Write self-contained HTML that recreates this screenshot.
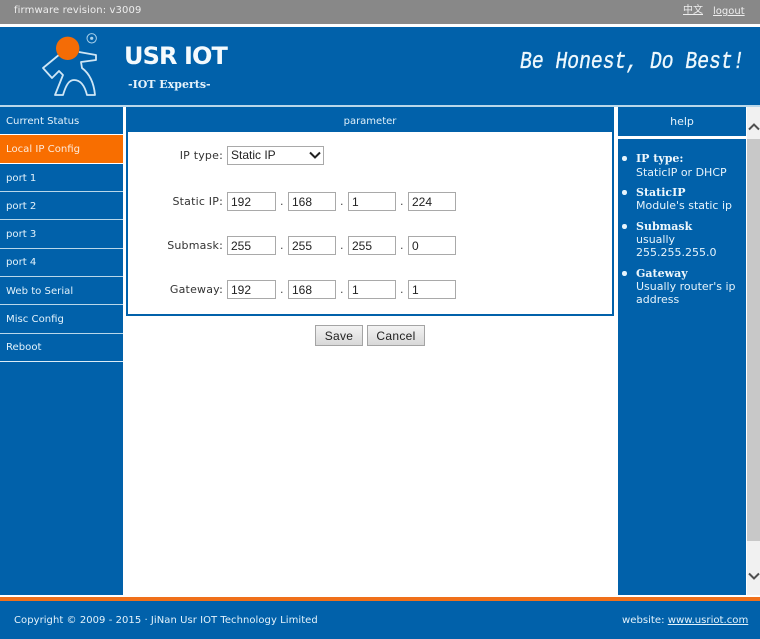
<!DOCTYPE html>
<html><head><meta charset="utf-8">
<style>
html,body{margin:0;padding:0;width:760px;height:639px;overflow:hidden;background:#fff}
body{position:relative;font-family:"DejaVu Sans","Liberation Sans","Noto Sans CJK SC",sans-serif;font-size:10px;color:#333}
.a{position:absolute;white-space:nowrap}
.b{background:#0161aa}
.m{left:6px;color:#e3f2fb;line-height:14px;font-size:10.1px}
.l{color:#333;font-size:11px;letter-spacing:.2px;line-height:14px;text-align:right;width:100px;left:123px}
.i{height:17px;border:1px solid #a9a9a9;background:#fff;font:12px/18px "Liberation Sans",sans-serif;color:#222;padding-left:3px;box-sizing:content-box;width:43px}
.w{width:44px}
.d{color:#444;font-size:11px;line-height:14px}
.btn{background:linear-gradient(#f3f3f3,#d8d8d8);border:1px solid #a4a4a4;height:19px;font:12px/20px "Liberation Sans",sans-serif;color:#222;text-align:center;letter-spacing:.3px}
.h{left:636px;color:#e6f3fb;font-size:11px;line-height:13.5px}
.hb{font-family:"DejaVu Serif","Liberation Serif",serif;font-weight:bold;font-size:11px;color:#eef7fc}
.o{left:622px;width:4.5px;height:4.5px;border-radius:50%;background:#e6f3fb}
</style></head><body>
<div class="a" style="left:0;top:0;width:760px;height:24px;background:#888"></div>
<div class="a" style="left:14px;top:4px;color:#eee;line-height:14px;font-size:10px;letter-spacing:.12px">firmware revision: v3009</div>
<div class="a" style="left:683px;top:4px;color:#eee;font-size:10px;line-height:14px;text-decoration:underline">中文</div>
<div class="a" style="left:713px;top:5px;color:#eee;font-size:10px;line-height:14px;text-decoration:underline">logout</div>

<div class="a b" style="left:0;top:27px;width:760px;height:78px"></div>
<div class="a" style="left:0;top:105px;width:760px;height:2px;background:#b9d7ea"></div>

<svg class="a" style="left:0;top:0" width="120" height="105" viewBox="0 0 120 105">
<path d="M60 54 L43 68 L52 78 L59 71 L63 75 L55 95 L63 95 C66 85 69 80 74 80 C81 80 85 87 87 95 L95 95 C94 84 90 74 82 68 L81 62 L96 60 L96 55 L79 52" fill="none" stroke="#cfe6f5" stroke-width="1.8" stroke-linejoin="round"/>
<circle cx="67.7" cy="48.3" r="11.7" fill="#f46c06"/>
<circle cx="91.7" cy="38.3" r="4.7" fill="none" stroke="#a9d0ea" stroke-width="1"/>
<circle cx="91.7" cy="38.3" r="1.6" fill="#a9d0ea"/>
</svg>

<div class="a" style="left:124px;top:42px;font:bold 24px/28px 'DejaVu Sans',sans-serif;color:#f4fafd;letter-spacing:-.9px">USR IOT</div>
<div class="a" style="left:128px;top:78px;font:bold 11px/14px 'DejaVu Serif','Liberation Serif',serif;color:#e6f3fb">-IOT Experts-</div>
<div class="a" style="left:520px;top:49px;font:italic 19.7px/26px 'Liberation Mono',monospace;color:#eef8fd;-webkit-text-stroke:.3px #eef8fd;transform:scaleY(1.2);transform-origin:center">Be Honest, Do Best!</div>

<div class="a b" style="left:0;top:107px;width:123px;height:488px"></div>
<div class="a" style="left:0;top:135px;width:123px;height:28px;background:#f86e00"></div>
<div class="a" style="left:0;top:163px;width:123px;height:1px;background:#fff"></div>
<div class="a" style="left:0;top:191px;width:123px;height:1px;background:#b9d7ea"></div>
<div class="a" style="left:0;top:219px;width:123px;height:1px;background:#b9d7ea"></div>
<div class="a" style="left:0;top:248px;width:123px;height:1px;background:#b9d7ea"></div>
<div class="a" style="left:0;top:276px;width:123px;height:1px;background:#b9d7ea"></div>
<div class="a" style="left:0;top:304px;width:123px;height:1px;background:#b9d7ea"></div>
<div class="a" style="left:0;top:333px;width:123px;height:1px;background:#b9d7ea"></div>
<div class="a" style="left:0;top:361px;width:123px;height:1px;background:#dcecf6"></div>
<div class="a" style="left:0;top:134px;width:123px;height:1px;background:#fff"></div>

<div class="a m" style="top:115px">Current Status</div>
<div class="a m" style="top:143px;color:#fdeadb">Local IP Config</div>
<div class="a m" style="top:172px">port 1</div>
<div class="a m" style="top:200px">port 2</div>
<div class="a m" style="top:228px">port 3</div>
<div class="a m" style="top:256px">port 4</div>
<div class="a m" style="top:285px">Web to Serial</div>
<div class="a m" style="top:313px">Misc Config</div>
<div class="a m" style="top:341px">Reboot</div>

<div class="a" style="left:126px;top:107px;width:484px;height:207px;border:2px solid #0161aa;border-top:0;background:#fff"></div>
<div class="a b" style="left:126px;top:107px;width:488px;height:25px"></div>
<div class="a" style="left:126px;top:115px;width:488px;text-align:center;color:#dff0fa;line-height:14px;font-size:10px">parameter</div>

<div class="a l" style="top:149px">IP type:</div>
<div class="a l" style="top:195px">Static IP:</div>
<div class="a l" style="top:239px">Submask:</div>
<div class="a l" style="top:283px">Gateway:</div>

<div class="a" style="left:227px;top:146px;width:95px;height:17px;border:1px solid #a9a9a9;background:#fff;font:12px/17px 'Liberation Sans',sans-serif;color:#222;text-indent:3px">Static IP</div>
<svg class="a" style="left:309px;top:151px" width="12" height="8" viewBox="0 0 12 8"><path d="M1 1.5 L6 6.5 L11 1.5" fill="none" stroke="#222" stroke-width="2"/></svg>

<div class="a i w" style="left:227px;top:192px">192</div>
<div class="a i" style="left:288px;top:192px">168</div>
<div class="a i" style="left:348px;top:192px">1</div>
<div class="a i" style="left:408px;top:192px">224</div>
<div class="a i w" style="left:227px;top:236px">255</div>
<div class="a i" style="left:288px;top:236px">255</div>
<div class="a i" style="left:348px;top:236px">255</div>
<div class="a i" style="left:408px;top:236px">0</div>
<div class="a i w" style="left:227px;top:280px">192</div>
<div class="a i" style="left:288px;top:280px">168</div>
<div class="a i" style="left:348px;top:280px">1</div>
<div class="a i" style="left:408px;top:280px">1</div>

<div class="a d" style="left:280px;top:195px">.</div><div class="a d" style="left:340px;top:195px">.</div><div class="a d" style="left:400px;top:195px">.</div>
<div class="a d" style="left:280px;top:239px">.</div><div class="a d" style="left:340px;top:239px">.</div><div class="a d" style="left:400px;top:239px">.</div>
<div class="a d" style="left:280px;top:283px">.</div><div class="a d" style="left:340px;top:283px">.</div><div class="a d" style="left:400px;top:283px">.</div>

<div class="a btn" style="left:315px;top:325px;width:46px">Save</div>
<div class="a btn" style="left:367px;top:325px;width:56px">Cancel</div>

<div class="a b" style="left:618px;top:107px;width:128px;height:29px"></div>
<div class="a" style="left:618px;top:115px;width:128px;text-align:center;color:#e6f3fb;font-size:11px;line-height:14px">help</div>
<div class="a b" style="left:618px;top:139px;width:128px;height:456px"></div>

<div class="a o" style="top:156px"></div>
<div class="a h hb" style="top:152px">IP type:</div>
<div class="a h" style="top:166px">StaticIP or DHCP</div>
<div class="a o" style="top:190px"></div>
<div class="a h hb" style="top:186px">StaticIP</div>
<div class="a h" style="top:199px">Module's static ip</div>
<div class="a o" style="top:224px"></div>
<div class="a h hb" style="top:220px">Submask</div>
<div class="a h" style="top:233px">usually</div>
<div class="a h" style="top:246px">255.255.255.0</div>
<div class="a o" style="top:271px"></div>
<div class="a h hb" style="top:267px">Gateway</div>
<div class="a h" style="top:280px">Usually router's ip</div>
<div class="a h" style="top:293px">address</div>

<div class="a" style="left:747px;top:107px;width:13px;height:488px;background:#f1f1f1"></div>
<div class="a" style="left:747px;top:139px;width:13px;height:402px;background:#c8c8c8"></div>
<svg class="a" style="left:748px;top:123px" width="12" height="8" viewBox="0 0 12 8"><path d="M1 6.5 L6 1.5 L11 6.5" fill="none" stroke="#505050" stroke-width="2"/></svg>
<svg class="a" style="left:748px;top:572px" width="12" height="8" viewBox="0 0 12 8"><path d="M1 1.5 L6 6.5 L11 1.5" fill="none" stroke="#505050" stroke-width="2"/></svg>

<div class="a" style="left:0;top:597px;width:760px;height:4px;background:#f0701a"></div>
<div class="a b" style="left:0;top:601px;width:760px;height:38px"></div>
<div class="a" style="left:14px;top:614px;color:#e3f2fb;line-height:14px;font-size:10px;letter-spacing:.05px">Copyright © 2009 - 2015 · JiNan Usr IOT Technology Limited</div>
<div class="a" style="left:622px;top:614px;color:#e3f2fb;line-height:14px;font-size:10.1px">website: <span style="text-decoration:underline">www.usriot.com</span></div>
</body></html>
